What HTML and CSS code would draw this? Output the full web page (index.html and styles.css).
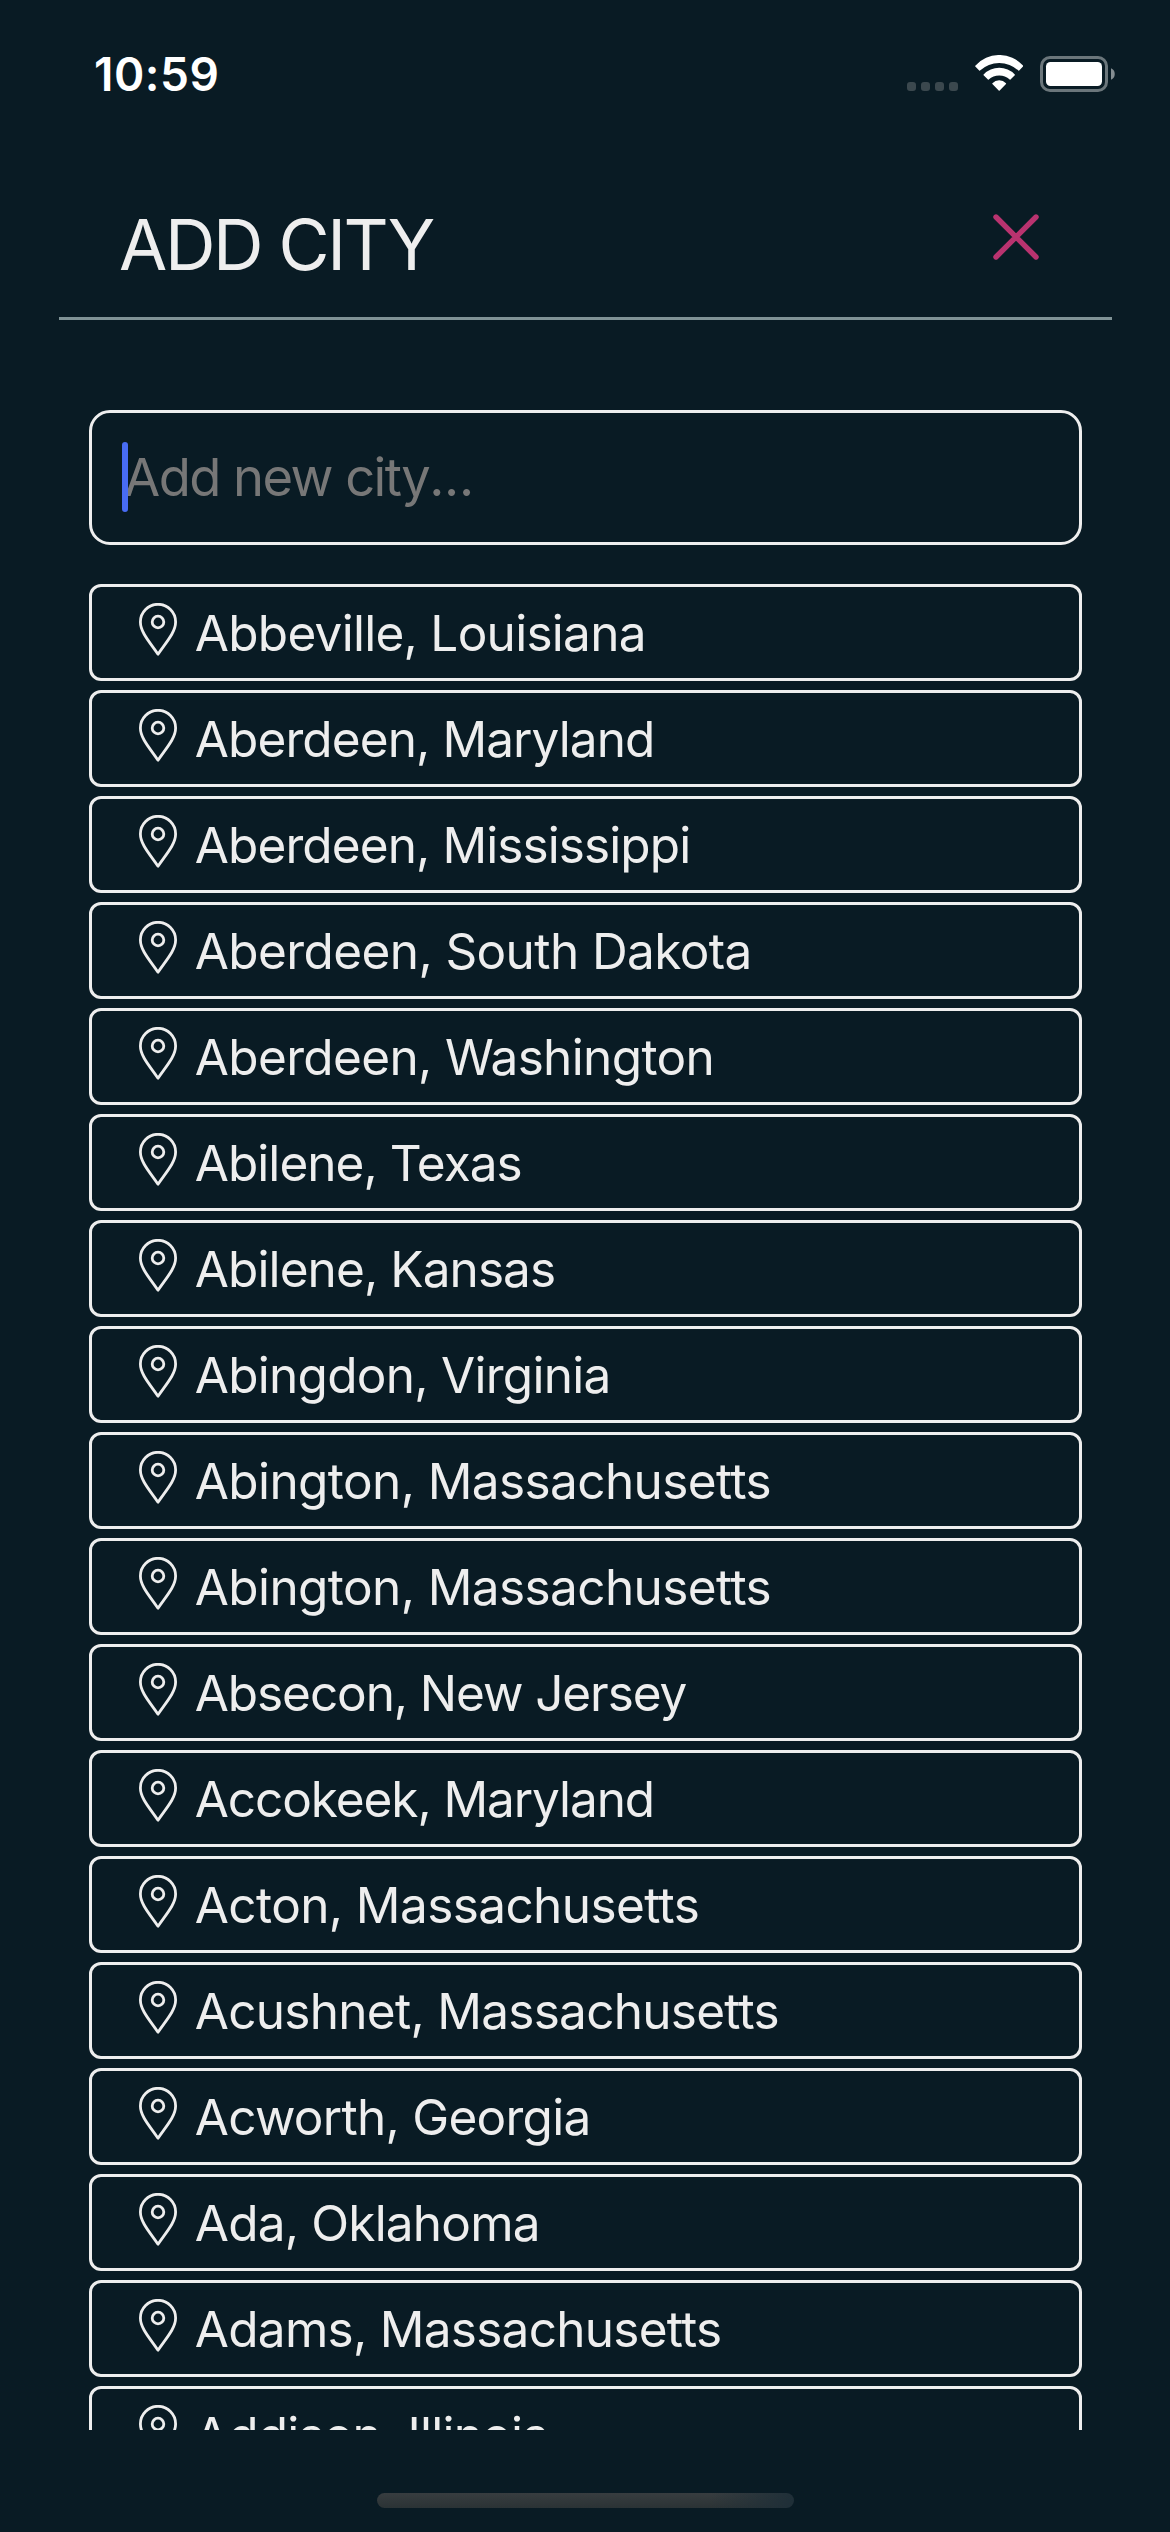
FILE: index.html
```html
<!DOCTYPE html>
<html lang="en">
<head>
<meta charset="utf-8">
<title>Add City</title>
<link rel="stylesheet" href="styles.css">
</head>
<body>
<svg width="0" height="0" class="sprite" aria-hidden="true">
  <symbol id="pin" viewBox="0 0 38 53">
    <path d="M19 51.2C11.2 39.6 1.4 29.4 1.4 18.9a17.6 17.6 0 0 1 35.2 0C36.6 29.4 26.8 39.6 19 51.2z"/>
    <circle cx="19" cy="19" r="5.8"/>
  </symbol>
</svg>
<div class="screen">
  <div class="status">
    <span class="time">10:59</span>
    <div class="signal"><i></i><i></i><i></i><i></i></div>
    <svg class="wifi" viewBox="0 0 48.4 36" width="48.4" height="36" fill="#fff">
      <path d="M.3 10.7A32 32 0 0 1 48.1 10.7Q48.5 11.1 48.1 11.5L44.2 15.6Q43.8 16 43.4 15.6A28 28 0 0 0 5 15.6Q4.6 16 4.2 15.6L.3 11.5Q-.1 11.1 .3 10.7z"/>
      <path d="M8.6 19.4A21.8 21.8 0 0 1 39.8 19.4Q40.2 19.8 39.8 20.2L35.5 24.6Q35.1 25 34.7 24.6A15.2 15.2 0 0 0 13.7 24.6Q13.3 25 12.9 24.6L8.6 20.2Q8.2 19.8 8.6 19.4z"/>
      <path d="M17.4 28.2A9.4 9.4 0 0 1 31 28.2Q31.4 28.7 31 29.1L24.7 35.6Q24.2 36 23.7 35.6L17.4 29.1Q17 28.7 17.4 28.2z"/>
    </svg>
    <svg class="battery" viewBox="0 0 75 36" width="75" height="36">
      <rect x="1.5" y="1.5" width="65" height="33" rx="8.5" fill="none" stroke="#6b767b" stroke-width="3"/>
      <rect x="6" y="6" width="56" height="24" rx="4.5" fill="#fff"/>
      <path d="M71 12.3a6.2 6.2 0 0 1 0 11.4z" fill="#848d91"/>
    </svg>
  </div>
  <header class="header">
    <h1>ADD CITY</h1>
    <svg class="close" viewBox="0 0 46 46" width="46" height="46"><path d="M3 3L43 43M43 3L3 43"/></svg>
  </header>
  <main class="content">
    <div class="search"><span class="caret"></span><span class="placeholder">Add new city<span class="dots">...</span></span></div>
    <ul class="cities">
      <li><svg><use href="#pin"/></svg><span>Abbeville, Louisiana</span></li>
      <li><svg><use href="#pin"/></svg><span>Aberdeen, Maryland</span></li>
      <li><svg><use href="#pin"/></svg><span>Aberdeen, Mississippi</span></li>
      <li><svg><use href="#pin"/></svg><span>Aberdeen, South Dakota</span></li>
      <li><svg><use href="#pin"/></svg><span>Aberdeen, Washington</span></li>
      <li><svg><use href="#pin"/></svg><span>Abilene, Texas</span></li>
      <li><svg><use href="#pin"/></svg><span>Abilene, Kansas</span></li>
      <li><svg><use href="#pin"/></svg><span>Abingdon, Virginia</span></li>
      <li><svg><use href="#pin"/></svg><span>Abington, Massachusetts</span></li>
      <li><svg><use href="#pin"/></svg><span>Abington, Massachusetts</span></li>
      <li><svg><use href="#pin"/></svg><span>Absecon, New Jersey</span></li>
      <li><svg><use href="#pin"/></svg><span>Accokeek, Maryland</span></li>
      <li><svg><use href="#pin"/></svg><span>Acton, Massachusetts</span></li>
      <li><svg><use href="#pin"/></svg><span>Acushnet, Massachusetts</span></li>
      <li><svg><use href="#pin"/></svg><span>Acworth, Georgia</span></li>
      <li><svg><use href="#pin"/></svg><span>Ada, Oklahoma</span></li>
      <li><svg><use href="#pin"/></svg><span>Adams, Massachusetts</span></li>
      <li><svg><use href="#pin"/></svg><span>Addison, Illinois</span></li>
    </ul>
  </main>
  <div class="home"></div>
</div>
</body>
</html>
```
FILE: styles.css
```css
* { box-sizing: border-box; }
body {
  margin: 0;
  background: #091b24;
  color: #eee;
  font-family: Inter, "Liberation Sans", sans-serif;
}
.sprite { display: block; position: absolute; }
.screen {
  width: 1170px;
  height: 2532px;
  display: flex;
  flex-direction: column;
  overflow: hidden;
}

/* Status bar */
.status {
  height: 140px;
  padding: 55px 55px 0 94px;
  display: flex;
  align-items: flex-start;
  flex: none;
}
.time {
  margin-right: auto;
  color: #fff;
  font-size: 46px;
  font-weight: 600;
  line-height: 38px;
  letter-spacing: .5px;
}
.signal { display: flex; gap: 5px; margin: 27px 17px 0 0; }
.signal i { width: 9px; height: 9px; border-radius: 3px; background: #3b484e; }
.wifi { margin-right: 16.6px; }
.battery { margin-top: 1px; }

/* Title bar */
.header {
  height: 180px;
  margin: 0 58px 0 59px;
  padding: 64px 73px 0 60px;
  border-bottom: 3px solid #809396;
  display: flex;
  justify-content: space-between;
  align-items: flex-start;
  flex: none;
}
h1 {
  margin: 0;
  font-size: 70px;
  font-weight: 400;
  line-height: 82px;
  letter-spacing: -2.4px;
}
.close {
  margin-top: 10px;
  fill: none;
  stroke: #b9336f;
  stroke-width: 5.4;
  stroke-linecap: round;
}

/* Search field and results */
.content {
  height: 2110px;
  padding: 90px 88px 0 89px;
  display: flex;
  flex-direction: column;
  gap: 39px;
  overflow: hidden;
  flex: none;
}
.search {
  height: 135px;
  padding-left: 30px;
  border: 3px solid #eee;
  border-radius: 21px;
  display: flex;
  align-items: center;
  flex: none;
}
.caret {
  width: 6px;
  height: 70px;
  margin: -1px -4px 0 0;
  border-radius: 3px;
  background: #486cf4;
  z-index: 1;
}
.placeholder {
  margin-top: -2px;
  color: #777;
  font-size: 52.5px;
  line-height: 64px;
  letter-spacing: -1.57px;
}
.dots { letter-spacing: -.3px; }
.cities {
  margin: 0;
  padding: 0;
  list-style: none;
  display: flex;
  flex-direction: column;
  gap: 9px;
}
.cities li {
  height: 97px;
  padding: 16px 20px 0 47px;
  border: 3px solid #eee;
  border-radius: 12px;
  display: flex;
  align-items: flex-start;
  gap: 17.8px;
  flex: none;
  font-size: 49.5px;
  line-height: 60px;
  letter-spacing: -.72px;
}
.cities svg {
  width: 38px;
  height: 53px;
  fill: none;
  stroke: #eee;
  stroke-width: 2.8;
  stroke-linejoin: round;
  flex: none;
}

/* Tracking tuned to the width of each name */
.cities li:nth-child(2), .cities li:nth-child(3), .cities li:nth-child(7) { letter-spacing: -.9px; }
.cities li:nth-child(6) { letter-spacing: -.96px; }
.cities li:nth-child(4), .cities li:nth-child(9), .cities li:nth-child(10), .cities li:nth-child(13) { letter-spacing: -.6px; }
.cities li:nth-child(5) { letter-spacing: -.65px; }
.cities li:nth-child(11), .cities li:nth-child(12) { letter-spacing: -1.09px; }
.cities li:nth-child(16), .cities li:nth-child(18) { letter-spacing: -.8px; }

/* Home indicator */
.home {
  width: 417px;
  height: 15px;
  margin: 63px 0 0 377px;
  border-radius: 8px;
  background: linear-gradient(90deg, transparent 80%, #1f2f38 100%), linear-gradient(#383d40, #2b3335);
  flex: none;
}
```
